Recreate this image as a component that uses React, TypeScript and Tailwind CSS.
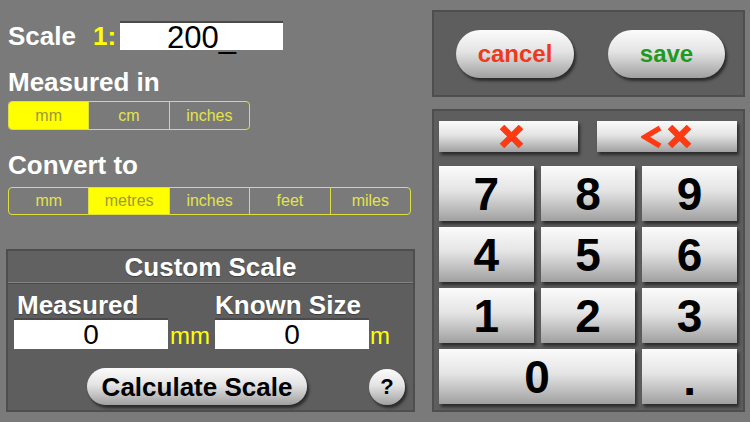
import React from "react";

const F = { fontFamily: '"Liberation Sans", Arial, sans-serif' };

const keyBg =
  "bg-[linear-gradient(to_bottom,#fbfbfb_0%,#e4e4e4_45%,#a0a0a0_100%)] shadow-[2px_3px_3px_rgba(0,0,0,0.55)]";

function Seg({ items, active, widthClass }: { items: string[]; active: number; widthClass: string }) {
  return (
    <div className={`flex ${widthClass} border border-[#dede3c] rounded-[4px] overflow-hidden`}>
      {items.map((it, i) => (
        <div
          key={it}
          className={`flex-1 flex items-center justify-center text-[16px] ${
            i > 0 ? "border-l border-[#dede3c]" : ""
          } ${i === active ? "bg-[#ffff00] text-[#9a9a3c]" : "text-[#e4e44a]"}`}
        >
          {it}
        </div>
      ))}
    </div>
  );
}

function Key({ children, className = "" }: { children: React.ReactNode; className?: string }) {
  return (
    <div className={`${keyBg} flex items-center justify-center font-bold text-black ${className}`}>
      {children}
    </div>
  );
}

function Cross() {
  return (
    <svg width="25" height="23" viewBox="0 0 25 23">
      <path d="M3 2 L22 21 M22 2 L3 21" stroke="#ff3a12" strokeWidth="6.5" strokeLinecap="butt" fill="none" />
    </svg>
  );
}

function Less() {
  return (
    <svg width="21" height="24" viewBox="0 0 21 24">
      <path d="M19 3 L4 12 L19 21" stroke="#ff3a12" strokeWidth="5.5" strokeLinejoin="miter" fill="none" />
    </svg>
  );
}

export default function App() {
  return (
    <div style={F} className="w-[750px] h-[422px] bg-[#7a7a7a] flex overflow-hidden select-none">
      {/* left column */}
      <div className="w-[426px] flex flex-col pl-[6px]">
        <div className="pl-[2px] mt-[20px] h-[31px] flex items-center">
          <span className="text-white font-bold text-[26px] leading-none">Scale</span>
          <span className="ml-[17px] text-[#ffff00] font-bold text-[26px] leading-none">1:</span>
          <div className="ml-[4px] w-[163px] h-[29px] bg-white border-t-2 border-[#4a4a4a] flex items-center justify-center">
            <span className="text-black text-[31px] leading-none mt-[2px]">200_</span>
          </div>
        </div>

        <div className="pl-[2px] mt-[16px] h-[30px] flex items-center">
          <span className="text-white font-bold text-[26px] leading-none">Measured in</span>
        </div>
        <div className="pl-[2px] mt-[4px] h-[29px] flex">
          <Seg items={["mm", "cm", "inches"]} active={0} widthClass="w-[242px]" />
        </div>

        <div className="pl-[2px] mt-[20px] h-[30px] flex items-center">
          <span className="text-white font-bold text-[26px] leading-none">Convert to</span>
        </div>
        <div className="pl-[2px] mt-[7px] h-[28px] flex">
          <Seg items={["mm", "metres", "inches", "feet", "miles"]} active={1} widthClass="w-[403px]" />
        </div>

        {/* custom scale panel */}
        <div className="mt-[34px] w-[409px] h-[163px] border-2 border-[#4e4e4e] bg-[#5e5e5e] flex flex-col">
          <div className="h-[32px] flex items-center justify-center bg-[#616161] border-b border-[#838383]">
            <span className="text-white font-bold text-[26px] leading-none [text-shadow:0_1px_1px_rgba(0,0,0,0.35)]">
              Custom Scale
            </span>
          </div>
          <div className="border-t border-[#4a4a4a] flex-1 flex flex-col pl-[6px]">
            <div className="flex mt-[8px]">
              <div className="w-[201px] flex flex-col">
                <span className="ml-[3px] h-[26px] text-white font-bold text-[26px] leading-[26px] [text-shadow:0_1px_1px_rgba(0,0,0,0.35)]">
                  Measured
                </span>
                <div className="flex items-end">
                  <div className="w-[154px] h-[31px] bg-white border-t-2 border-[#4a4a4a] flex items-center justify-center">
                    <span className="text-black text-[28px] leading-none">0</span>
                  </div>
                  <span className="ml-[2px] text-[#ffff00] text-[24px] leading-none mb-[1px]">mm</span>
                </div>
              </div>
              <div className="flex flex-col">
                <span className="h-[26px] text-white font-bold text-[26px] leading-[26px] [text-shadow:0_1px_1px_rgba(0,0,0,0.35)]">
                  Known Size
                </span>
                <div className="flex items-end">
                  <div className="w-[154px] h-[31px] bg-white border-t-2 border-[#4a4a4a] flex items-center justify-center">
                    <span className="text-black text-[28px] leading-none">0</span>
                  </div>
                  <span className="ml-[1px] text-[#ffff00] text-[24px] leading-none mb-[1px]">m</span>
                </div>
              </div>
            </div>
            <div className="flex items-center mt-[19px]">
              <div
                className={`ml-[73px] w-[220px] h-[37px] rounded-full ${keyBg} flex items-center justify-center`}
              >
                <span className="text-black font-bold text-[26px] leading-none">Calculate Scale</span>
              </div>
              <div
                className={`ml-[62px] w-[36px] h-[36px] rounded-full ${keyBg} flex items-center justify-center`}
              >
                <span className="text-black font-bold text-[22px] leading-none">?</span>
              </div>
            </div>
          </div>
        </div>
      </div>

      {/* right column */}
      <div className="ml-[6px] w-[313px] flex flex-col">
        <div className="mt-[10px] h-[87px] border-2 border-[#4e4e4e] bg-[#5e5e5e] flex items-center pl-[22px]">
          <div className={`w-[118px] h-[48px] rounded-full ${keyBg} flex items-center justify-center`}>
            <span className="text-[#ee3a1c] font-bold text-[24px] leading-none">cancel</span>
          </div>
          <div className={`ml-[34px] w-[117px] h-[48px] rounded-full ${keyBg} flex items-center justify-center`}>
            <span className="text-[#1f9a1f] font-bold text-[24px] leading-none">save</span>
          </div>
        </div>

        <div className="mt-[12px] h-[303px] border-2 border-[#4e4e4e] bg-[#5e5e5e] flex flex-col pl-[5px] pt-[10px]">
          <div className="flex h-[31px]">
            <Key className="w-[139px] h-[31px]">
              <span className="ml-[5px] flex">
                <Cross />
              </span>
            </Key>
            <Key className="ml-[19px] w-[140px] h-[31px]">
              <span className="flex items-center gap-[5px] mr-[2px]">
                <Less />
                <Cross />
              </span>
            </Key>
          </div>
          <div className="mt-[14px] w-[298px] grid grid-cols-3 gap-x-[7px] gap-y-[6px]">
            {["7", "8", "9", "4", "5", "6", "1", "2", "3"].map((d) => (
              <Key key={d} className="h-[55px]">
                <span className="text-[46px] leading-none">{d}</span>
              </Key>
            ))}
            <Key className="h-[55px] col-span-2">
              <span className="text-[46px] leading-none">0</span>
            </Key>
            <Key className="h-[55px]">
              <span className="text-[46px] leading-none mt-[4px]">.</span>
            </Key>
          </div>
        </div>
      </div>
    </div>
  );
}
